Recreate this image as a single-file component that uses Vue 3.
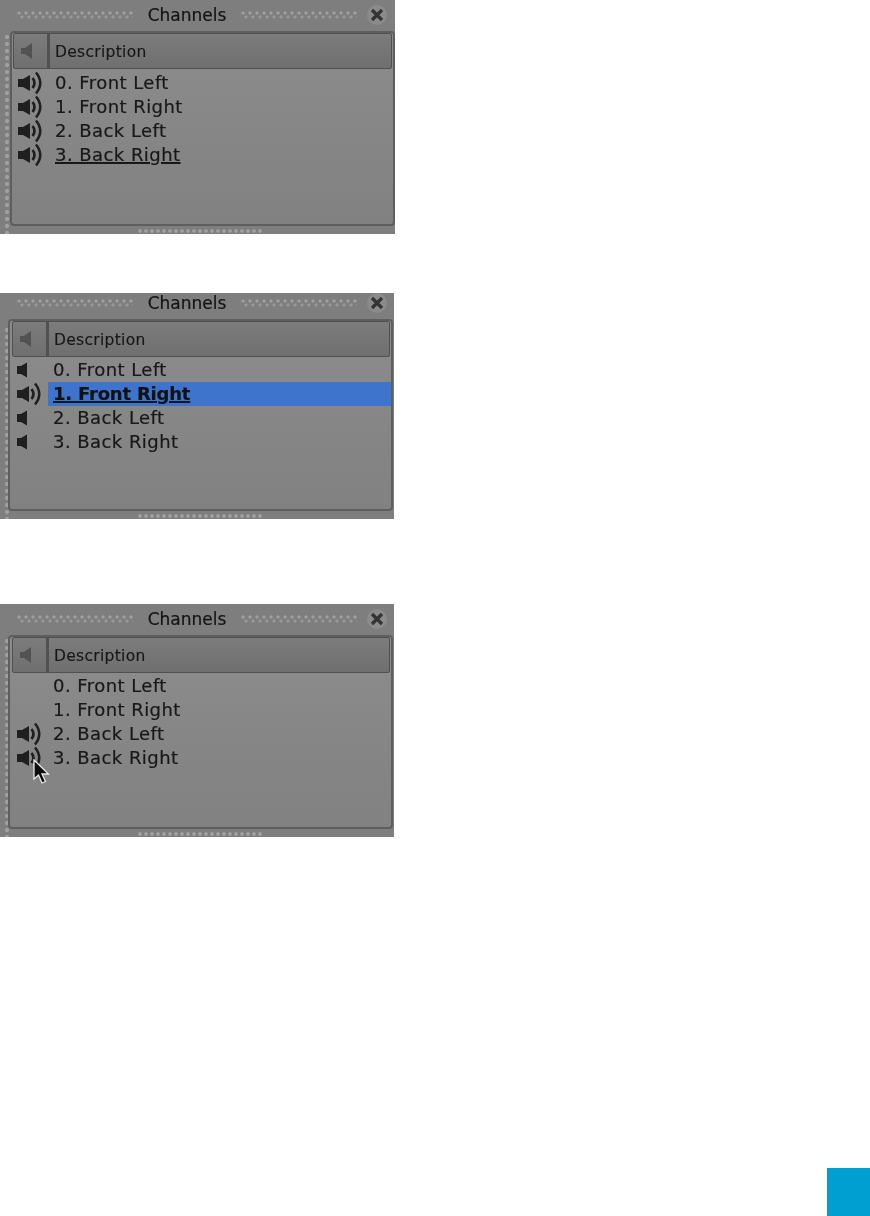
<script setup>
const names = ['0. Front Left', '1. Front Right', '2. Back Left', '3. Back Right']

const panels = [
  { id: 'a', cls: 'first', on: [0, 1, 2, 3], selected: -1, underlined: 3 },
  { id: 'b', cls: 'second', on: [1], muted: [0, 2, 3], selected: 1, underlined: 1 },
  { id: 'c', cls: 'third', on: [2, 3], selected: -1, underlined: -1, cursor: true },
]
</script>

<template>
  <div class="page">
    <section v-for="p in panels" :key="p.id" class="panel" :class="p.cls">
      <div class="left-grip"></div>
      <header class="titlebar">
        <span class="grip"></span>
        <span class="title">Channels</span>
        <span class="grip"></span>
        <span class="close">
          <svg width="14" height="14" viewBox="0 0 14 14">
            <path d="M2 2 L12 12 M12 2 L2 12" stroke="#333" stroke-width="3.2" fill="none" />
          </svg>
        </span>
      </header>
      <div class="box">
        <div class="head">
          <div class="head-icon">
            <svg width="14" height="18" viewBox="0 0 14 18">
              <path d="M1 6 H5 L12 1 V17 L5 12 H1 Z" fill="#525252" />
            </svg>
          </div>
          <div class="head-label">Description</div>
        </div>
        <div v-for="(name, i) in names" :key="i" class="row">
          <div class="row-icon">
            <svg width="26" height="28" viewBox="0 0 26 28">
              <path
                v-if="p.on.includes(i)"
                d="M1 10 H6 L13 6 V22 L6 18 H1 Z"
                fill="#1f1f1f"
              />
              <path
                v-else-if="p.muted && p.muted.includes(i)"
                d="M1 10 H5 L11 6.5 V21.5 L5 18 H1 Z"
                fill="#1f1f1f"
              />
              <template v-if="p.on.includes(i)">
                <path d="M15.5 9 Q19.5 14 15.5 19" stroke="#1f1f1f" stroke-width="2.7" fill="none" />
                <path d="M19 3.5 Q27.5 14 19 24.5" stroke="#1f1f1f" stroke-width="2.5" fill="none" />
              </template>
            </svg>
          </div>
          <div class="row-label" :class="{ selected: p.selected === i }">
            <span :class="{ under: p.underlined === i, strong: p.selected === i }">{{ name }}</span>
          </div>
        </div>
        <svg v-if="p.cursor" class="cursor" width="19" height="27" viewBox="0 0 19 27">
          <path
            d="M2 1 V20 L6.5 16 L10 24 L13.5 22.5 L10 15 L16.5 15 Z"
            fill="#0d0d0d"
            stroke="#e8e8e8"
            stroke-width="1.3"
          />
        </svg>
      </div>
      <div class="bottom-grip"></div>
    </section>
    <div class="corner"></div>
  </div>
</template>

<style scoped>
.page {
  position: relative;
  width: 870px;
  height: 1216px;
  background: #fff;
  overflow: hidden;
  font-family: "DejaVu Sans", sans-serif;
}
.panel {
  position: relative;
  box-sizing: border-box;
  width: 394px;
  background: #7e7e7e;
  filter: blur(0.5px);
  display: flex;
  flex-direction: column;
}
.first {
  width: 395px;
  height: 234px;
}
.second {
  height: 226px;
  margin-top: 59px;
}
.third {
  height: 233px;
  margin-top: 85px;
}
.titlebar {
  display: flex;
  align-items: center;
  gap: 13px;
  height: 29px;
  padding: 0 7px 0 17px;
  flex: none;
}
.second .titlebar {
  height: 19px;
  margin-bottom: 5px;
}
.grip {
  width: 116px;
  height: 8px;
  background-image: radial-gradient(circle at 2px 2px, #a0a0a0 1.3px, transparent 1.9px),
    radial-gradient(circle at 5px 6px, #989898 1.3px, transparent 1.9px);
  background-size: 7px 8px;
}
.title {
  width: 82px;
  text-align: center;
  white-space: nowrap;
  font-size: 17px;
  color: #141414;
  -webkit-text-stroke: 0.2px #141414;
}
.close {
  width: 20px;
  height: 20px;
  margin-left: -3px;
  border-radius: 50%;
  background: #8b8b8b;
  display: flex;
  align-items: center;
  justify-content: center;
}
.box {
  position: relative;
  flex: 1;
  margin: 2px 0 8px 10px;
  width: 385px;
  box-sizing: border-box;
  border: 2px solid #5e5e5e;
  border-radius: 4px;
  padding: 0 0 0 1px;
  background: linear-gradient(#8c8c8c, #818181);
}
.second .box,
.third .box {
  margin-left: 8px;
}
.head {
  display: flex;
  height: 34px;
  margin-right: 1px;
  background: linear-gradient(#7c7c7c, #6f6f6f);
  border: 1px solid #505050;
  border-radius: 2px;
  margin-bottom: 2px;
}
.second .head,
.third .head {
  margin-left: 1px;
  margin-bottom: 1px;
}
.head-icon {
  width: 36px;
  flex: none;
  border-right: 3px solid #515151;
  display: flex;
  align-items: center;
  padding-left: 6px;
  box-sizing: border-box;
}
.head-label {
  padding-left: 5px;
  line-height: 36px;
  font-size: 15.5px;
  letter-spacing: 0.3px;
  color: #181818;
  -webkit-text-stroke: 0.15px #181818;
}
.row {
  display: flex;
  height: 24px;
}
.row-icon {
  width: 37px;
  flex: none;
  padding-left: 4px;
  box-sizing: border-box;
  margin-top: -2px;
}
.second .row-icon,
.third .row-icon {
  padding-left: 5px;
}
.row-label {
  flex: 1;
  padding-left: 5px;
  line-height: 24px;
  font-size: 18px;
  letter-spacing: 0.45px;
  color: #181818;
  -webkit-text-stroke: 0.2px #181818;
  white-space: nowrap;
}
.row-label.selected {
  background: #3f74cc;
  color: #111;
}
.under {
  text-decoration: underline;
  text-decoration-thickness: 2px;
  text-underline-offset: 1px;
}
.strong {
  font-weight: 600;
  letter-spacing: -0.2px;
}
.cursor {
  position: absolute;
  left: 22px;
  top: 122px;
}
.left-grip {
  position: absolute;
  left: 4px;
  top: 34px;
  bottom: 0;
  width: 6px;
  background-image: radial-gradient(circle at 3px 3px, #a0a0a0 1.7px, transparent 2.4px);
  background-size: 6px 7px;
}
.bottom-grip {
  position: absolute;
  left: 137px;
  bottom: 0;
  width: 126px;
  height: 5px;
  background-image: radial-gradient(circle at 3px 2px, #a0a0a0 1.5px, transparent 2.1px);
  background-size: 6px 5px;
}
.corner {
  position: absolute;
  right: 0;
  bottom: 0;
  width: 43px;
  height: 48px;
  background: #009fd1;
}
</style>
